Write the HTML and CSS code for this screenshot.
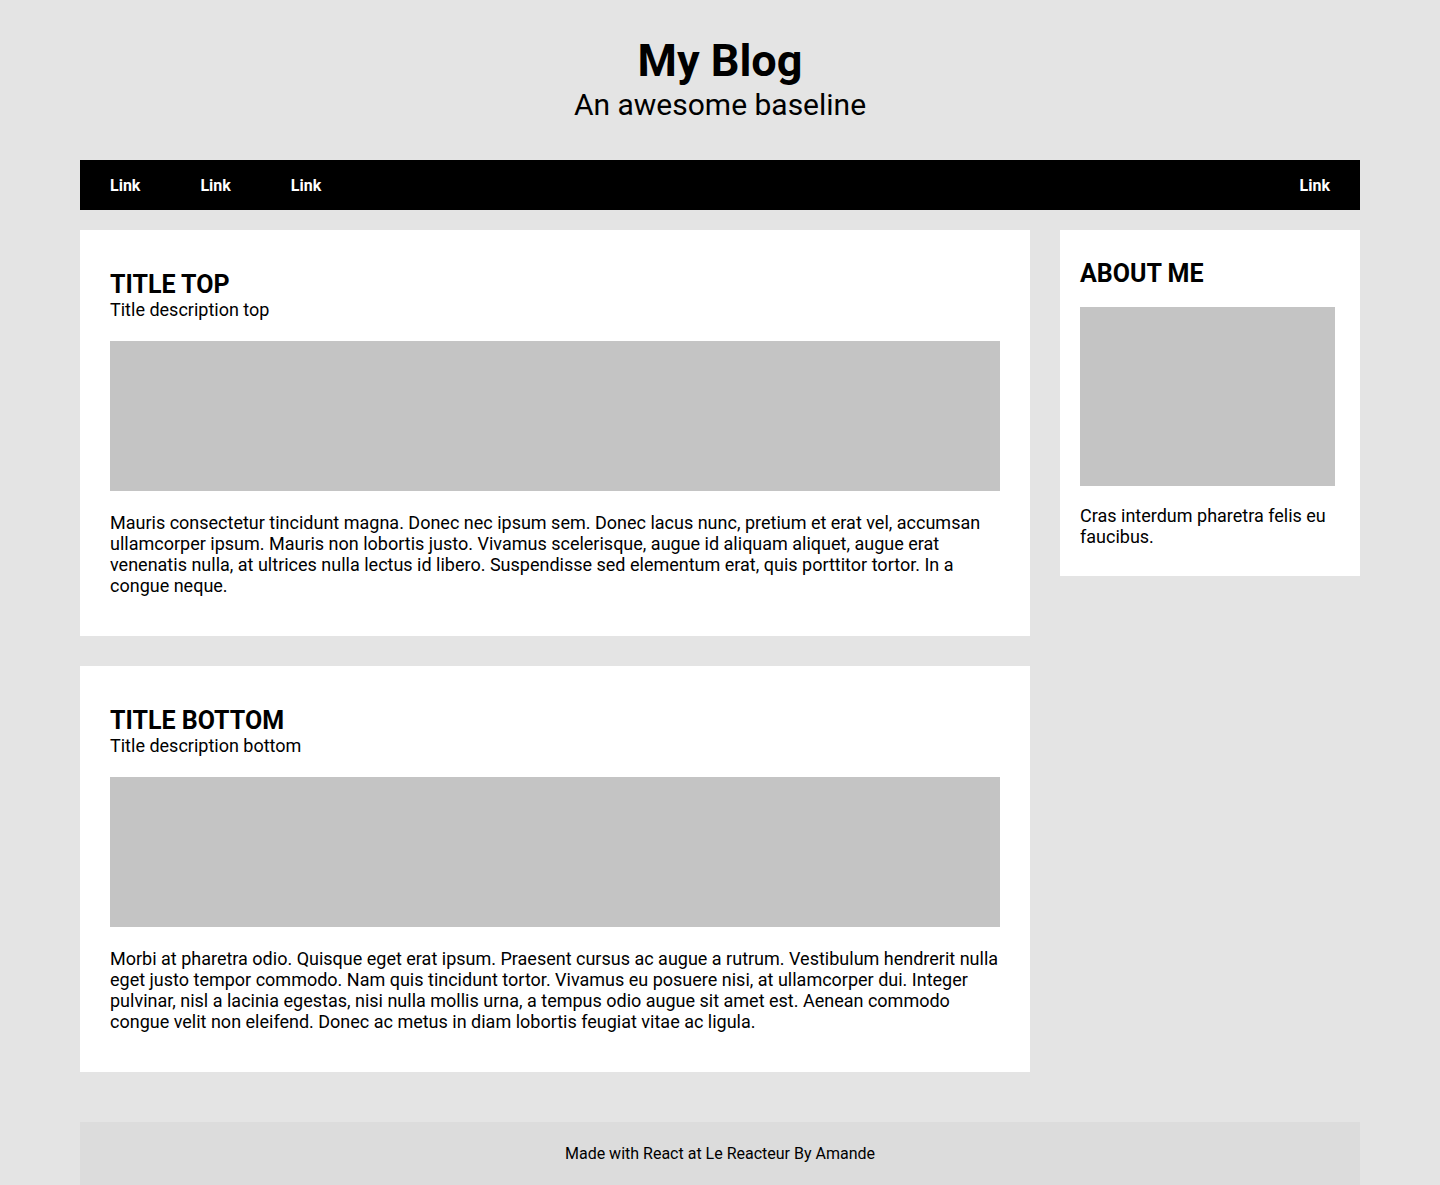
FILE: index.html
```html
<!DOCTYPE html>
<html lang="en">
<head>
<meta charset="utf-8">
<title>My Blog</title>
<link rel="stylesheet" href="styles.css">
</head>
<body>
<div class="page">
  <header class="header">
    <h1 class="header-title">My Blog</h1>
    <p class="header-sub">An awesome baseline</p>
  </header>
  <nav class="nav">
    <div class="nav-left">
      <a class="nav-link" href="#">Link</a>
      <a class="nav-link" href="#">Link</a>
      <a class="nav-link" href="#">Link</a>
    </div>
    <a class="nav-link" href="#">Link</a>
  </nav>
  <div class="layout">
    <main class="articles">
      <article class="card">
        <h2 class="card-title">TITLE TOP</h2>
        <p class="card-desc">Title description top</p>
        <div class="card-img"></div>
        <p class="card-text">Mauris consectetur tincidunt magna. Donec nec ipsum sem. Donec lacus nunc, pretium et erat vel, accumsan ullamcorper ipsum. Mauris non lobortis justo. Vivamus scelerisque, augue id aliquam aliquet, augue erat venenatis nulla, at ultrices nulla lectus id libero. Suspendisse sed elementum erat, quis porttitor tortor. In a congue neque.</p>
      </article>
      <article class="card">
        <h2 class="card-title">TITLE BOTTOM</h2>
        <p class="card-desc">Title description bottom</p>
        <div class="card-img"></div>
        <p class="card-text">Morbi at pharetra odio. Quisque eget erat ipsum. Praesent cursus ac augue a rutrum. Vestibulum hendrerit nulla eget justo tempor commodo. Nam quis tincidunt tortor. Vivamus eu posuere nisi, at ullamcorper dui. Integer pulvinar, nisl a lacinia egestas, nisi nulla mollis urna, a tempus odio augue sit amet est. Aenean commodo congue velit non eleifend. Donec ac metus in diam lobortis feugiat vitae ac ligula.</p>
      </article>
    </main>
    <aside class="side">
      <h2 class="side-title">ABOUT ME</h2>
      <div class="side-img"></div>
      <p class="side-text">Cras interdum pharetra felis eu faucibus.</p>
    </aside>
  </div>
  <footer class="footer">Made with React at Le Reacteur By Amande</footer>
</div>
</body>
</html>
```

FILE: styles.css
```css
* { box-sizing: border-box; }
html, body { margin: 0; padding: 0; }
body {
  background: #e4e4e4;
  font-family: Roboto, "Liberation Sans", sans-serif;
  color: #000;
}
.page {
  width: 1280px;
  margin: 0 auto;
}
.header {
  text-align: center;
  padding-top: 35px;
  height: 160px;
}
.header-title {
  margin: 0;
  font-size: 45px;
  font-weight: 700;
  line-height: 52px;
}
.header-sub {
  margin: 0;
  font-size: 30px;
  line-height: 36px;
}
.nav {
  background: #000;
  height: 50px;
  display: flex;
  align-items: center;
  justify-content: space-between;
  padding: 0 30px;
}
.nav-left {
  display: flex;
  gap: 60px;
}
.nav-link {
  color: #fff;
  font-weight: 700;
  font-size: 16px;
  text-decoration: none;
}
.layout {
  display: flex;
  align-items: flex-start;
  gap: 30px;
  margin-top: 20px;
}
.articles {
  width: 950px;
  display: flex;
  flex-direction: column;
  gap: 30px;
}
.card {
  background: #fff;
  padding: 40px 30px;
}
.card-title {
  margin: 0;
  font-size: 25px;
  line-height: 29px;
  font-weight: 700;
}
.card-desc {
  margin: 0;
  font-size: 18px;
  line-height: 21px;
}
.card-img {
  background: #c4c4c4;
  height: 150px;
  margin: 21px 0 21px;
}
.card-text {
  margin: 0;
  font-size: 18px;
  line-height: 21px;
}
.side {
  width: 300px;
  background: #fff;
  padding: 29px 25px 29px 20px;
}
.side-title {
  margin: 0;
  font-size: 25px;
  line-height: 29px;
  font-weight: 700;
}
.side-img {
  background: #c4c4c4;
  height: 179px;
  margin: 19px 0 19px;
}
.side-text {
  margin: 0;
  font-size: 18px;
  line-height: 21px;
}
.footer {
  margin-top: 50px;
  background: #dcdcdc;
  height: 63px;
  display: flex;
  align-items: center;
  justify-content: center;
  font-size: 16px;
}
```
